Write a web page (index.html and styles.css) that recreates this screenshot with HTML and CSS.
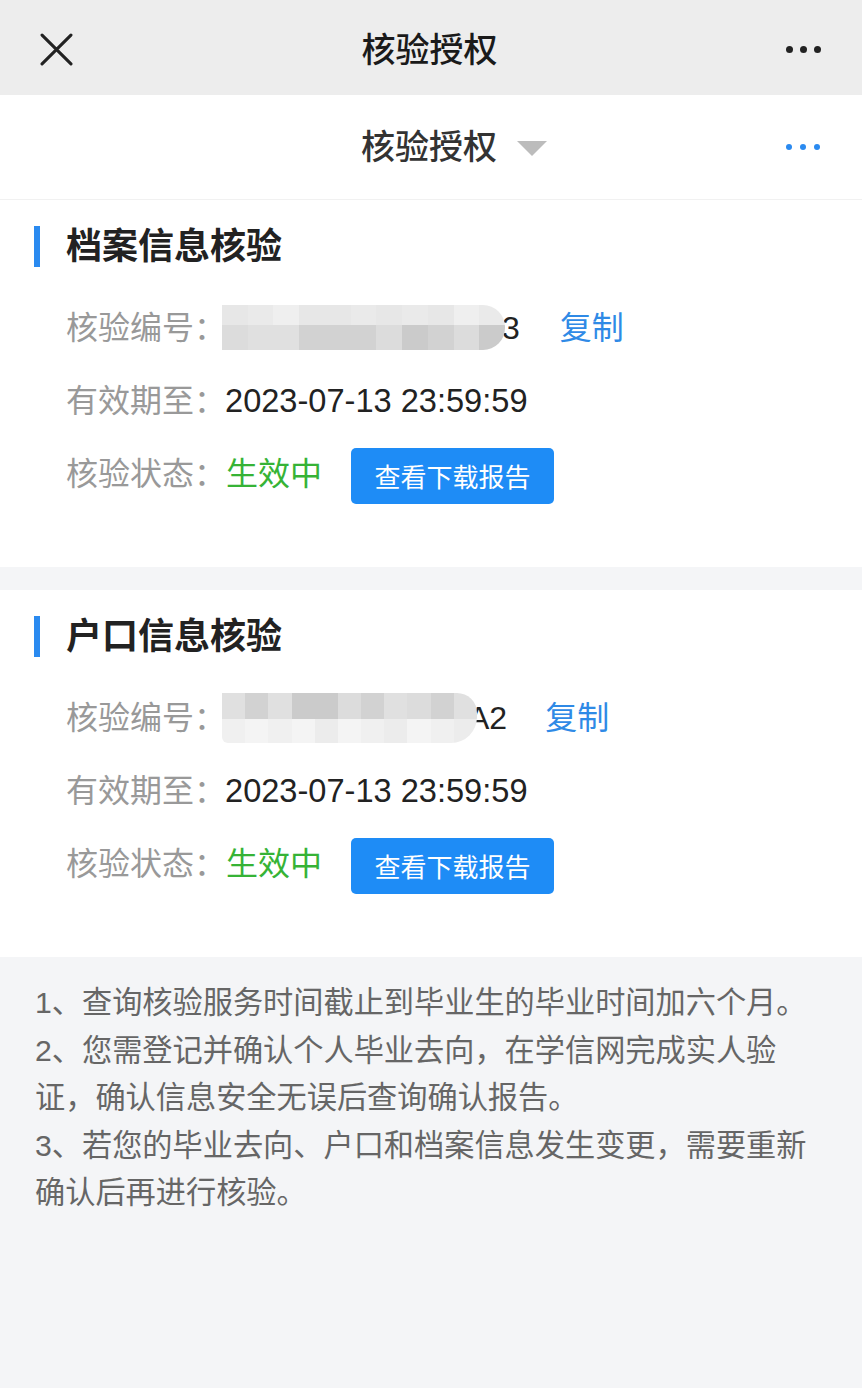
FILE: index.html
```html
<!DOCTYPE html>
<html lang="zh-CN">
<head>
<meta charset="utf-8">
<title>核验授权</title>
<link rel="stylesheet" href="styles.css">
</head>
<body>
<div class="page">
  <header class="topbar">
    <svg class="close" viewBox="0 0 32 32" width="32" height="32"><path d="M2 2 L30 30 M30 2 L2 30" stroke="#222" stroke-width="3" stroke-linecap="round" fill="none"/></svg>
    <div class="topbar-title">核验授权</div>
    <div class="dots dark"><i></i><i></i><i></i></div>
  </header>

  <div class="subbar">
    <div class="subbar-title">核验授权<span class="tri"></span></div>
    <div class="dots blue"><i></i><i></i><i></i></div>
  </div>

  <section class="card">
    <h2 class="card-title">档案信息核验</h2>
    <div class="row">
      <span class="label">核验编号：</span>
      <span class="value"><span class="blur b1"><i class="l1"></i><i class="l2"></i><i class="l3"></i><i class="l1"></i><i class="l1"></i><i class="l2"></i><i class="l1"></i><i class="l2"></i><i class="l1"></i><i class="l3"></i><i class="l2"></i><i class="d1"></i><i class="d2"></i><i class="d2"></i><i class="d3"></i><i class="d3"></i><i class="d3"></i><i class="d1"></i><i class="d4"></i><i class="d3"></i><i class="d1"></i><i class="d4"></i></span>3</span>
      <a class="copy">复制</a>
    </div>
    <div class="row">
      <span class="label">有效期至：</span>
      <span class="value date">2023-07-13 23:59:59</span>
    </div>
    <div class="row">
      <span class="label">核验状态：</span>
      <span class="status">生效中</span>
      <button class="btn">查看下载报告</button>
    </div>
  </section>

  <section class="card">
    <h2 class="card-title">户口信息核验</h2>
    <div class="row">
      <span class="label">核验编号：</span>
      <span class="value"><span class="blur b2"><i class="d2"></i><i class="d3"></i><i class="d2"></i><i class="d4"></i><i class="d4"></i><i class="d1"></i><i class="d3"></i><i class="d2"></i><i class="d1"></i><i class="d3"></i><i class="d2"></i><i class="w1"></i><i class="w2"></i><i class="w1"></i><i class="w2"></i><i class="w3"></i><i class="w2"></i><i class="w1"></i><i class="w3"></i><i class="w2"></i><i class="w1"></i><i class="w3"></i></span>A2</span>
      <a class="copy c2">复制</a>
    </div>
    <div class="row">
      <span class="label">有效期至：</span>
      <span class="value date">2023-07-13 23:59:59</span>
    </div>
    <div class="row">
      <span class="label">核验状态：</span>
      <span class="status">生效中</span>
      <button class="btn">查看下载报告</button>
    </div>
  </section>

  <footer class="notes">
    <p>1、查询核验服务时间截止到毕业生的毕业时间加六个月。</p>
    <p>2、您需登记并确认个人毕业去向，在学信网完成实人验<br>证，确认信息安全无误后查询确认报告。</p>
    <p>3、若您的毕业去向、户口和档案信息发生变更，需要重新确认后再进行核验。</p>
  </footer>
</div>
</body>
</html>
```

FILE: styles.css
```css
* { box-sizing: border-box; }
html, body { margin: 0; padding: 0; }
body {
  font-family: "Liberation Sans", "Noto Sans CJK SC", sans-serif;
  background: #f4f5f7;
  color: #222;
}
.page {
  width: 862px;
  min-height: 1388px;
  background: #f4f5f7;
}

/* top bar */
.topbar {
  height: 95px;
  background: #ededed;
  display: flex;
  align-items: center;
  justify-content: space-between;
  padding: 4px 40px 0 40px;
  position: relative;
}
.close { width: 33px; height: 33px; display: block; }
.topbar-title {
  font-size: 34px;
  font-weight: 500;
  color: #1a1a1a;
  line-height: 40px;
}
.dots { display: flex; gap: 8px; align-items: center; }
.dots i { display: block; width: 6px; height: 6px; border-radius: 50%; }
.dots.dark i { background: #222; width: 7px; height: 7px; }
.dots.dark { margin-right: 1px; gap: 7px; }
.dots.blue i { background: #2a8af0; }

/* sub bar */
.subbar {
  height: 105px;
  background: #fff;
  border-bottom: 1px solid #f1f1f1;
  display: flex;
  align-items: center;
  justify-content: center;
  position: relative;
}
.subbar-title {
  font-size: 34px;
  font-weight: 500;
  color: #333;
  line-height: 40px;
  display: flex;
  align-items: center;
  margin-left: 46px;
}
.tri {
  display: inline-block;
  width: 0; height: 0;
  border-left: 15px solid transparent;
  border-right: 15px solid transparent;
  border-top: 15px solid #bcbcbc;
  margin-left: 20px;
  margin-top: 2px;
}
.subbar .dots {
  position: absolute;
  right: 42px;
  top: 49px;
}

/* cards */
.card {
  background: #fff;
  padding: 26px 0 57px 0;
}
.card + .card { margin-top: 23px; }
.card-title {
  margin: 0 0 24px 34px;
  padding-left: 26px;
  border-left: 6px solid #2a8af0;
  font-size: 36px;
  font-weight: 700;
  line-height: 41px;
  color: #222;
}
.row {
  height: 73px;
  display: flex;
  align-items: center;
  padding-left: 66px;
  font-size: 32px;
}
.label { color: #999; line-height: 40px; }
.value {
  color: #222;
  line-height: 40px;
  display: flex;
  align-items: center;
}
.date { font-size: 32.6px; margin-left: -1px; }
.copy {
  color: #2f8ae6;
  margin-left: 40px;
  line-height: 40px;
}
.copy.c2 { margin-left: 38px; }
.status { color: #36b336; line-height: 40px; }
.btn {
  margin-left: 29px;
  margin-top: 4px;
  width: 203px;
  height: 56px;
  border: 0;
  border-radius: 5px;
  background: #1e8cf6;
  color: #fff;
  font-family: "Noto Sans CJK SC", sans-serif;
  font-size: 26px;
  padding: 0;
  line-height: 56px;
}

/* blurred id */
.blur {
  display: grid;
  grid-template-columns: repeat(11, 1fr);
  grid-template-rows: 20px 1fr;
  height: 45px;
  width: 283px;
  margin-left: -4px;
  border-radius: 0 22px 22px 0;
  overflow: hidden;
  position: relative;
  z-index: 1;
}
.blur i { display: block; }
.b1 { margin-right: -3px; }
.b2 { width: 255px; height: 50px; grid-template-rows: 26px 1fr; border-radius: 0 20px 26px 6px; margin-right: -9px; }
.l1 { background: #e7e7e7; }
.l2 { background: #eaeaea; }
.l3 { background: #efefef; }
.d1 { background: #dcdcdc; }
.d2 { background: #e0e0e0; }
.d3 { background: #d2d2d2; }
.d4 { background: #cbcbcb; }
.w1 { background: #f0f0f0; }
.w2 { background: #f4f4f4; }
.w3 { background: #ececec; }

/* notes */
.notes {
  padding: 22px 30px 0 35px;
  font-family: "Liberation Sans", "Noto Sans CJK SC", sans-serif;
  font-size: 30.2px;
  line-height: 47.5px;
  color: #666;
}
.notes p { margin: 0; }
```
